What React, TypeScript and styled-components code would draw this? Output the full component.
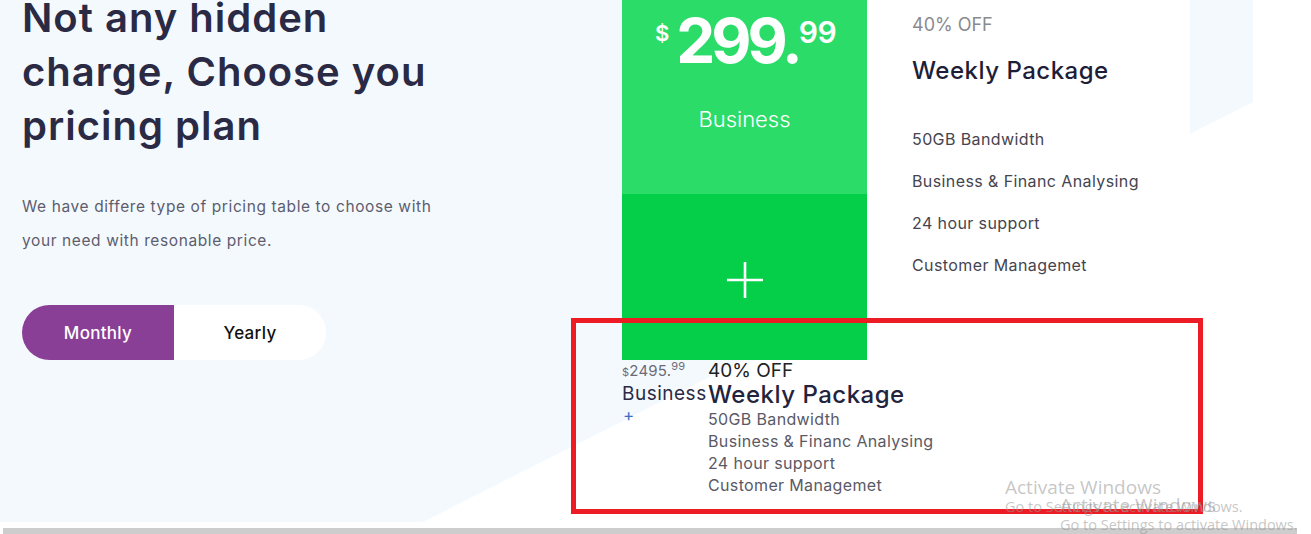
import React from "react";
import styled, { createGlobalStyle } from "styled-components";

const GlobalStyle = createGlobalStyle`
  html, body {
    margin: 0;
    padding: 0;
    background: #ffffff;
  }
  body {
    font-family: "Inter", "Noto Sans", sans-serif;
  }
`;

const Page = styled.div`
  width: 1311px;
  height: 534px;
  position: relative;
  overflow: hidden;
  display: flex;
  flex-direction: column;
  background: #ffffff;
`;

const Section = styled.section`
  position: relative;
  height: 528px;
  display: flex;
  padding-left: 22px;
  isolation: isolate;

  &::before {
    content: "";
    position: absolute;
    inset: 0;
    z-index: -1;
    background: #f4f9fe;
    clip-path: polygon(0 0, 1253px 0, 1253px 102px, 423px 522px, 0 522px);
  }
`;

const LeftCol = styled.div`
  width: 600px;
  flex-shrink: 0;
  display: flex;
  flex-direction: column;
`;

const Heading = styled.h1`
  margin: -9px 0 0;
  font-size: 40px;
  line-height: 54px;
  font-weight: 600;
  color: #2b2a45;
  letter-spacing: 1px;
`;

const Lead = styled.p`
  margin: 37px 0 0;
  font-size: 15.5px;
  line-height: 34px;
  color: #5e5d6e;
  letter-spacing: 0.6px;
  width: 440px;
`;

const Toggle = styled.div`
  margin-top: 47px;
  display: flex;
  width: 304px;
  height: 55px;
  border-radius: 28px;
  overflow: hidden;
  background: #ffffff;
`;

const ToggleButton = styled.button<{ $active?: boolean }>`
  flex: 1;
  border: 0;
  padding: 0;
  font-family: inherit;
  font-size: 17px;
  font-weight: 500;
  letter-spacing: 0.3px;
  background: ${(p) => (p.$active ? "#8a3f96" : "#ffffff")};
  color: ${(p) => (p.$active ? "#ffffff" : "#111111")};
  cursor: pointer;
`;

const RightArea = styled.div`
  display: flex;
  flex-direction: column;
`;

const CardRow = styled.div`
  display: flex;
  height: 360px;
`;

const GreenCard = styled.div`
  width: 245px;
  display: flex;
  flex-direction: column;
`;

const CardTop = styled.div`
  height: 194px;
  background: #2bdc69;
  color: #ffffff;
  display: flex;
  flex-direction: column;
  align-items: center;
  padding-top: 10px;
  box-sizing: border-box;
`;

const PriceRow = styled.div`
  display: flex;
  align-items: flex-start;
  line-height: 1;
  margin-left: 2px;
`;

const Currency = styled.span`
  font-size: 22px;
  font-weight: 600;
  margin: 12px 7px 0 0;
`;

const Amount = styled.span`
  font-size: 62px;
  font-weight: 700;
  letter-spacing: -4px;
`;

const Cents = styled.span`
  font-size: 30px;
  font-weight: 600;
  margin: 7px 0 0 0;
  letter-spacing: -0.5px;
`;

const PlanName = styled.div`
  margin-top: 31px;
  font-size: 22px;
  line-height: 33px;
  font-weight: 300;
`;

const CardBottom = styled.div`
  flex: 1;
  background: #05cf48;
  display: flex;
  align-items: center;
  justify-content: center;
  padding-top: 6px;
`;

const Details = styled.div`
  width: 323px;
  padding: 10px 0 0 45px;
  box-sizing: border-box;
  background: #ffffff;
  display: flex;
  flex-direction: column;
`;

const Discount = styled.div`
  font-size: 18px;
  line-height: 30px;
  color: #8a8a8f;
`;

const PackageTitle = styled.div`
  margin-top: 14px;
  font-size: 24px;
  line-height: 34px;
  font-weight: 500;
  letter-spacing: 0.5px;
  color: #1f1e38;
`;

const FeatureList = styled.ul`
  list-style: none;
  margin: 30px 0 0;
  padding: 0;
`;

const Feature = styled.li`
  font-size: 16px;
  line-height: 42px;
  letter-spacing: 0.4px;
  color: #45444f;
`;

/* unstyled fallback copy of the plan, as it sits under the card */
const PlainRow = styled.div`
  display: flex;
  color: #2b2a45;
`;

const PlainLeft = styled.div`
  width: 86px;
  display: flex;
  flex-direction: column;
`;

const PlainPrice = styled.div`
  font-size: 15px;
  line-height: 22px;
  color: #6b6b78;
  letter-spacing: 0.2px;

  small {
    font-size: 11px;
  }
  sup {
    font-size: 11px;
    vertical-align: 6px;
    line-height: 0;
  }
`;

const PlainName = styled.div`
  font-size: 19px;
  line-height: 22px;
  letter-spacing: 0.5px;
`;

const PlainPlus = styled.div`
  font-size: 17px;
  line-height: 20px;
  color: #3c6fc2;
  padding-left: 1px;
`;

const PlainRight = styled.div`
  display: flex;
  flex-direction: column;
`;

const PlainDiscount = styled.div`
  font-size: 19px;
  line-height: 22px;
  color: #222222;
`;

const PlainTitle = styled.div`
  font-size: 24px;
  line-height: 26px;
  font-weight: 500;
  letter-spacing: 0.5px;
  color: #24233d;
`;

const PlainFeature = styled.div`
  font-size: 16px;
  line-height: 22px;
  letter-spacing: 0.35px;
  color: #5a5966;
`;

const Scrollbar = styled.div`
  height: 6px;
  margin-left: 3px;
  width: 1294px;
  background: #cdcdcd;
`;

const Annotation = styled.div`
  position: absolute;
  left: 571px;
  top: 318px;
  width: 632px;
  height: 196px;
  border: 5px solid #ed1c24;
  box-sizing: border-box;
  pointer-events: none;
`;

const Watermark = styled.div<{ $x: number; $y: number }>`
  position: absolute;
  left: ${(p) => p.$x}px;
  top: ${(p) => p.$y}px;
  font-family: "Open Sans", "Noto Sans", sans-serif;
  color: rgba(150, 150, 150, 0.55);
  pointer-events: none;
  white-space: nowrap;
`;

const WatermarkTitle = styled.div`
  font-size: 19px;
  line-height: 22px;
`;

const WatermarkSub = styled.div`
  font-size: 14.5px;
  line-height: 18px;
`;

const PlusIcon = () => (
  <svg width="38" height="38" viewBox="0 0 38 38" aria-hidden="true">
    <path d="M19 1v36M1 19h36" stroke="#ffffff" strokeWidth="2.6" fill="none" />
  </svg>
);

const features = [
  "50GB Bandwidth",
  "Business & Financ Analysing",
  "24 hour support",
  "Customer Managemet",
];

export default function App() {
  return (
    <>
      <GlobalStyle />
      <Page>
        <Section>
          <LeftCol>
            <Heading>
              Not any hidden
              <br />
              charge, Choose you
              <br />
              pricing plan
            </Heading>
            <Lead>
              We have differe type of pricing table to choose with your need
              with resonable price.
            </Lead>
            <Toggle>
              <ToggleButton $active>Monthly</ToggleButton>
              <ToggleButton>Yearly</ToggleButton>
            </Toggle>
          </LeftCol>

          <RightArea>
            <CardRow>
              <GreenCard>
                <CardTop>
                  <PriceRow>
                    <Currency>$</Currency>
                    <Amount>299.</Amount>
                    <Cents>99</Cents>
                  </PriceRow>
                  <PlanName>Business</PlanName>
                </CardTop>
                <CardBottom>
                  <PlusIcon />
                </CardBottom>
              </GreenCard>
              <Details>
                <Discount>40% OFF</Discount>
                <PackageTitle>Weekly Package</PackageTitle>
                <FeatureList>
                  {features.map((f) => (
                    <Feature key={f}>{f}</Feature>
                  ))}
                </FeatureList>
              </Details>
            </CardRow>

            <PlainRow>
              <PlainLeft>
                <PlainPrice>
                  <small>$</small>2495.<sup>99</sup>
                </PlainPrice>
                <PlainName>Business</PlainName>
                <PlainPlus>+</PlainPlus>
              </PlainLeft>
              <PlainRight>
                <PlainDiscount>40% OFF</PlainDiscount>
                <PlainTitle>Weekly Package</PlainTitle>
                {features.map((f) => (
                  <PlainFeature key={f}>{f}</PlainFeature>
                ))}
              </PlainRight>
            </PlainRow>
          </RightArea>
        </Section>
        <Scrollbar />

        <Annotation />
        <Watermark $x={1005} $y={476}>
          <WatermarkTitle>Activate Windows</WatermarkTitle>
          <WatermarkSub>Go to Settings to activate Windows.</WatermarkSub>
        </Watermark>
        <Watermark $x={1060} $y={494}>
          <WatermarkTitle>Activate Windows</WatermarkTitle>
          <WatermarkSub>Go to Settings to activate Windows.</WatermarkSub>
        </Watermark>
      </Page>
    </>
  );
}
